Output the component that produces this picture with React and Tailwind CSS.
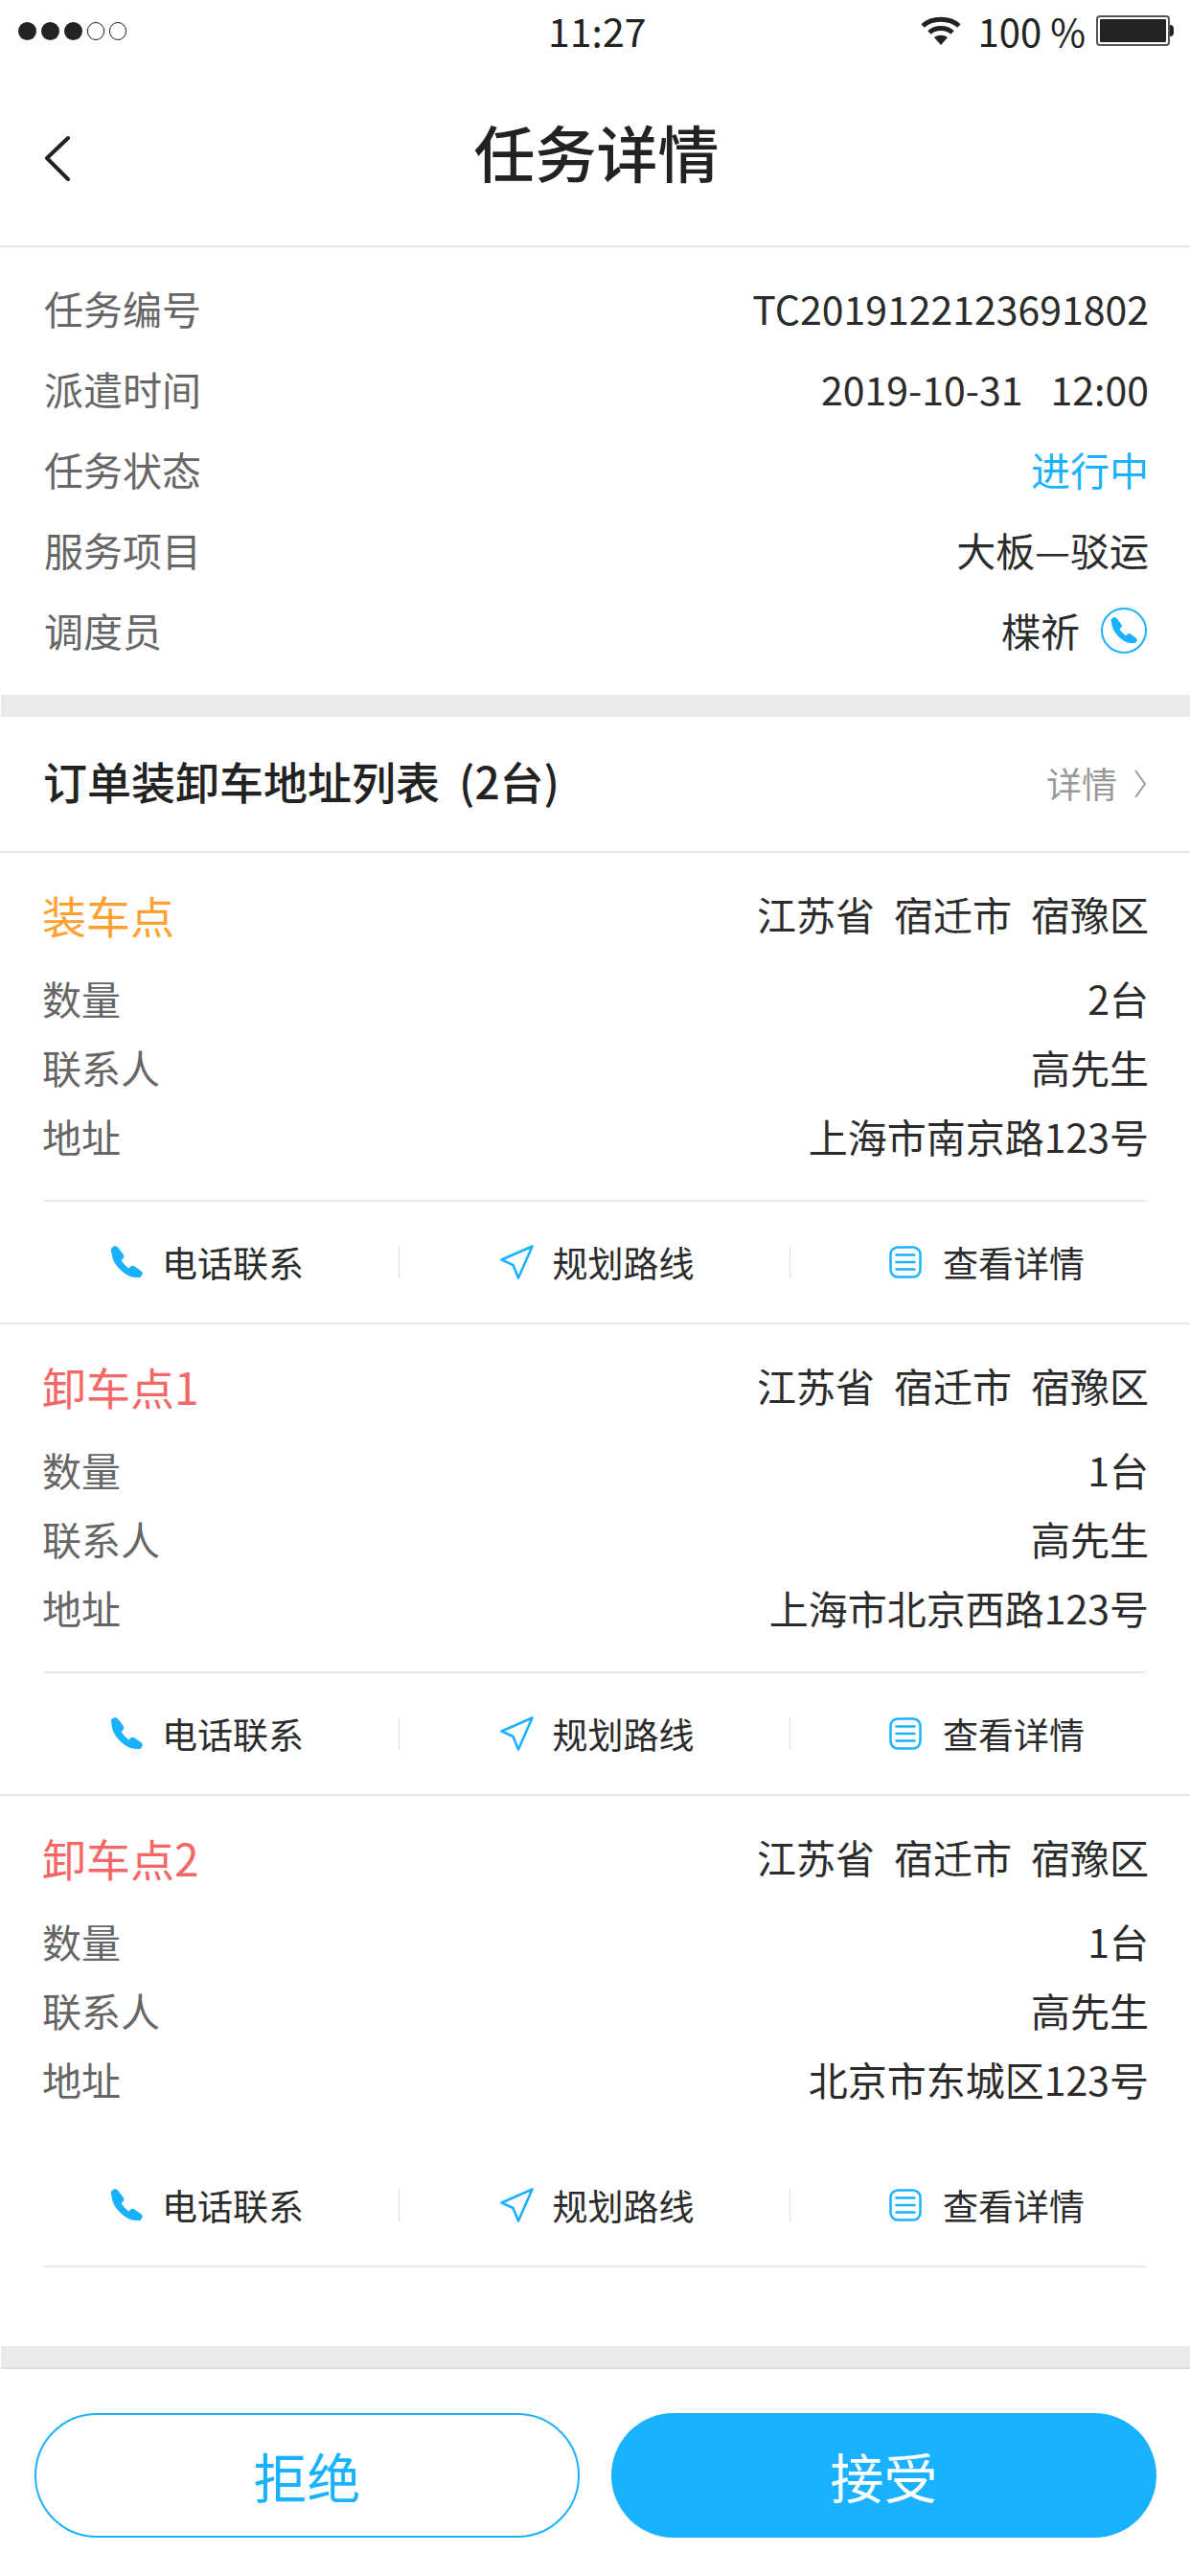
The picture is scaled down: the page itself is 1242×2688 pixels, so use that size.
const BLUE = '#1AB2FF'

function PhoneIcon({ size = 34 }) {
  return (
    <svg width={size} height={size} viewBox="0 0 34 34" fill="none" stroke={BLUE} strokeLinecap="round">
      <path d="M5 4.5 L10 11" strokeWidth="8.5" />
      <path d="M5 8 C6 17 17 29.5 27 29.5" strokeWidth="7" />
      <path d="M23.5 25 L29.5 29" strokeWidth="8" />
    </svg>
  )
}

function NavIcon() {
  return (
    <svg width="35" height="36" viewBox="0 0 35 36" fill="none" stroke={BLUE} strokeWidth="2.6" strokeLinejoin="round">
      <path d="M33.5 1.5 L1.5 15.5 L13.5 21 L19 34.5 Z" />
    </svg>
  )
}

function DocIcon() {
  return (
    <svg width="34" height="34" viewBox="0 0 34 34" fill="none" stroke={BLUE} strokeWidth="2.5" strokeLinecap="round">
      <rect x="1.5" y="1.5" width="31" height="31" rx="7.5" />
      <path d="M7.5 9.5 H26.5 M7.5 17 H26.5 M7.5 24.5 H26.5" />
    </svg>
  )
}

function StatusBar() {
  return (
    <div className="relative h-[64px] flex items-center justify-between pl-[19px] pr-[17px] text-[#222]">
      <div className="flex items-center gap-[5px]">
        <span className="w-[19px] h-[19px] rounded-full bg-[#222]" />
        <span className="w-[19px] h-[19px] rounded-full bg-[#222]" />
        <span className="w-[19px] h-[19px] rounded-full bg-[#222]" />
        <span className="w-[18px] h-[19px] rounded-full border border-[#222]" />
        <span className="w-[18px] h-[19px] rounded-full border border-[#222]" />
      </div>
      <div className="absolute left-[572px] top-[6px] text-[41px] leading-[50px]">11:27</div>
      <div className="flex items-center">
        <svg width="42" height="30" viewBox="0 0 42 30" fill="none" stroke="#222" strokeWidth="5">
          <path d="M2 10 C12 1 30 1 40 10" />
          <path d="M9 17 C15 11 27 11 33 17" />
          <path d="M21 30 L14 22 C18 19 24 19 28 22 Z" fill="#222" stroke="none" />
        </svg>
        <span className="ml-[18px] text-[40px] leading-[50px]">100 %</span>
        <div className="ml-[11px] flex items-center">
          <div className="w-[77px] h-[32px] border-2 border-[#555] rounded-[4px] p-[2px]">
            <div className="w-full h-full bg-[#222] rounded-[1px]" />
          </div>
          <div className="w-[4px] h-[12px] bg-[#222] rounded-r-full" />
        </div>
      </div>
    </div>
  )
}

function InfoRow({ label, children }) {
  return (
    <div className="h-[84px] flex items-center justify-between pl-[46px] pr-[43px]">
      <span className="text-[#666]">{label}</span>
      {children}
    </div>
  )
}

function Action({ icon, text, gap, className }) {
  return (
    <div className={`flex items-center justify-center ${className || ''}`} style={{ gap }}>
      {icon}
      <span className="text-[37px] leading-[37px] text-[#2b2b2b]">{text}</span>
    </div>
  )
}

function Actions() {
  return (
    <div className="h-[126px] grid grid-cols-[400px_1px_407px_1px_1fr] items-center pl-[16px] pr-[12px]">
      <Action icon={<PhoneIcon />} text="电话联系" gap={20} />
      <div className="h-[34px] bg-[#ddd]" />
      <Action icon={<NavIcon />} text="规划路线" gap={20} className="ml-[5px]" />
      <div className="h-[34px] bg-[#ddd]" />
      <Action icon={<DocIcon />} text="查看详情" gap={22} className="ml-[5px]" />
    </div>
  )
}

function Stop({ title, color, qty, address, last }) {
  return (
    <div className={last ? '' : 'border-b-2 border-[#e8e8e8]'}>
      <div className="pt-[25px] pl-[44px] pr-[43px] h-[103px] flex items-center justify-between">
        <span className="text-[46px]" style={{ color }}>{title}</span>
        <div className="flex gap-[20px] text-[#2b2b2b]">
          <span>江苏省</span>
          <span>宿迁市</span>
          <span>宿豫区</span>
        </div>
      </div>
      <div className="pt-[13px] pl-[44px] pr-[43px]">
        {[['数量', qty], ['联系人', '高先生'], ['地址', address]].map(([k, v]) => (
          <div key={k} className="h-[72px] flex items-center justify-between">
            <span className="text-[#666]">{k}</span>
            <span className="text-[#2b2b2b]">{v}</span>
          </div>
        ))}
      </div>
      <div className="mt-[30px] h-[2px] mx-[46px]">
        {!last && <div className="h-full bg-[#e8e8e8]" />}
      </div>
      <Actions />
      {last && <div className="mx-[46px] h-[2px] bg-[#e8e8e8]" />}
    </div>
  )
}

export default function App() {
  return (
    <div className="w-[1242px] h-[2688px] bg-white text-[41px] font-['Noto_Sans_CJK_SC','Noto_Sans',sans-serif] overflow-hidden">
      <StatusBar />

      <div className="h-[194px] border-b-2 border-[#e8e8e8] relative flex items-center justify-center">
        <svg className="absolute left-[45px] top-[77px]" width="30" height="48" viewBox="0 0 30 48" fill="none" stroke="#222" strokeWidth="4" strokeLinecap="round" strokeLinejoin="round">
          <path d="M26 3 L4 24 L26 46" />
        </svg>
        <h1 className="text-[64px] leading-[80px] font-medium text-[#222] mt-[-6px] ml-[3px]">任务详情</h1>
      </div>

      <div className="pt-[22px] pb-[25px]">
        <InfoRow label="任务编号"><span className="text-[#2b2b2b]">TC2019122123691802</span></InfoRow>
        <InfoRow label="派遣时间">
          <div className="flex gap-[29px] text-[#2b2b2b]">
            <span>2019-10-31</span>
            <span>12:00</span>
          </div>
        </InfoRow>
        <InfoRow label="任务状态"><span style={{ color: BLUE }}>进行中</span></InfoRow>
        <InfoRow label="服务项目"><span className="text-[#2b2b2b]">大板—驳运</span></InfoRow>
        <InfoRow label="调度员">
          <div className="flex items-center gap-[22px] mr-[2px]">
            <span className="text-[#2b2b2b]">楪祈</span>
            <span className="w-[48px] h-[48px] rounded-full border-2 border-[#1AB2FF] flex items-center justify-center">
              <PhoneIcon size={28} />
            </span>
          </div>
        </InfoRow>
      </div>

      <div className="h-[23px] ml-px bg-[#eaeaea]" />

      <div className="h-[142px] border-b-2 border-[#e8e8e8] flex items-center justify-between pl-[45px] pr-[45px]">
        <div className="text-[46px] font-medium text-[#222] mt-[-8px]">
          <span>订单装卸车地址列表</span>
          <span className="ml-[20px]">(2台)</span>
        </div>
        <div className="flex items-center gap-[17px]">
          <span className="text-[37px] text-[#999]">详情</span>
          <svg width="14" height="32" viewBox="0 0 14 32" fill="none" stroke="#999" strokeWidth="2" strokeLinejoin="round">
            <path d="M2 2 L12 16 L2 30" />
          </svg>
        </div>
      </div>

      <Stop title="装车点" color="#FFA033" qty="2台" address="上海市南京路123号" />
      <Stop title="卸车点1" color="#F56666" qty="1台" address="上海市北京西路123号" />
      <Stop title="卸车点2" color="#F56666" qty="1台" address="北京市东城区123号" last />

      <div className="mt-[82px] h-[24px] ml-px bg-[#eaeaea] border-b-2 border-[#ddd]" />

      <div className="mt-[46px] flex justify-between pl-[36px] pr-[35px]">
        <button className="w-[569px] h-[130px] rounded-full border-2 border-[#1AB2FF] text-[56px] text-[#1AB2FF]">拒绝</button>
        <button className="w-[569px] h-[130px] rounded-full bg-[#1AB2FF] text-[56px] text-white">接受</button>
      </div>
    </div>
  )
}
